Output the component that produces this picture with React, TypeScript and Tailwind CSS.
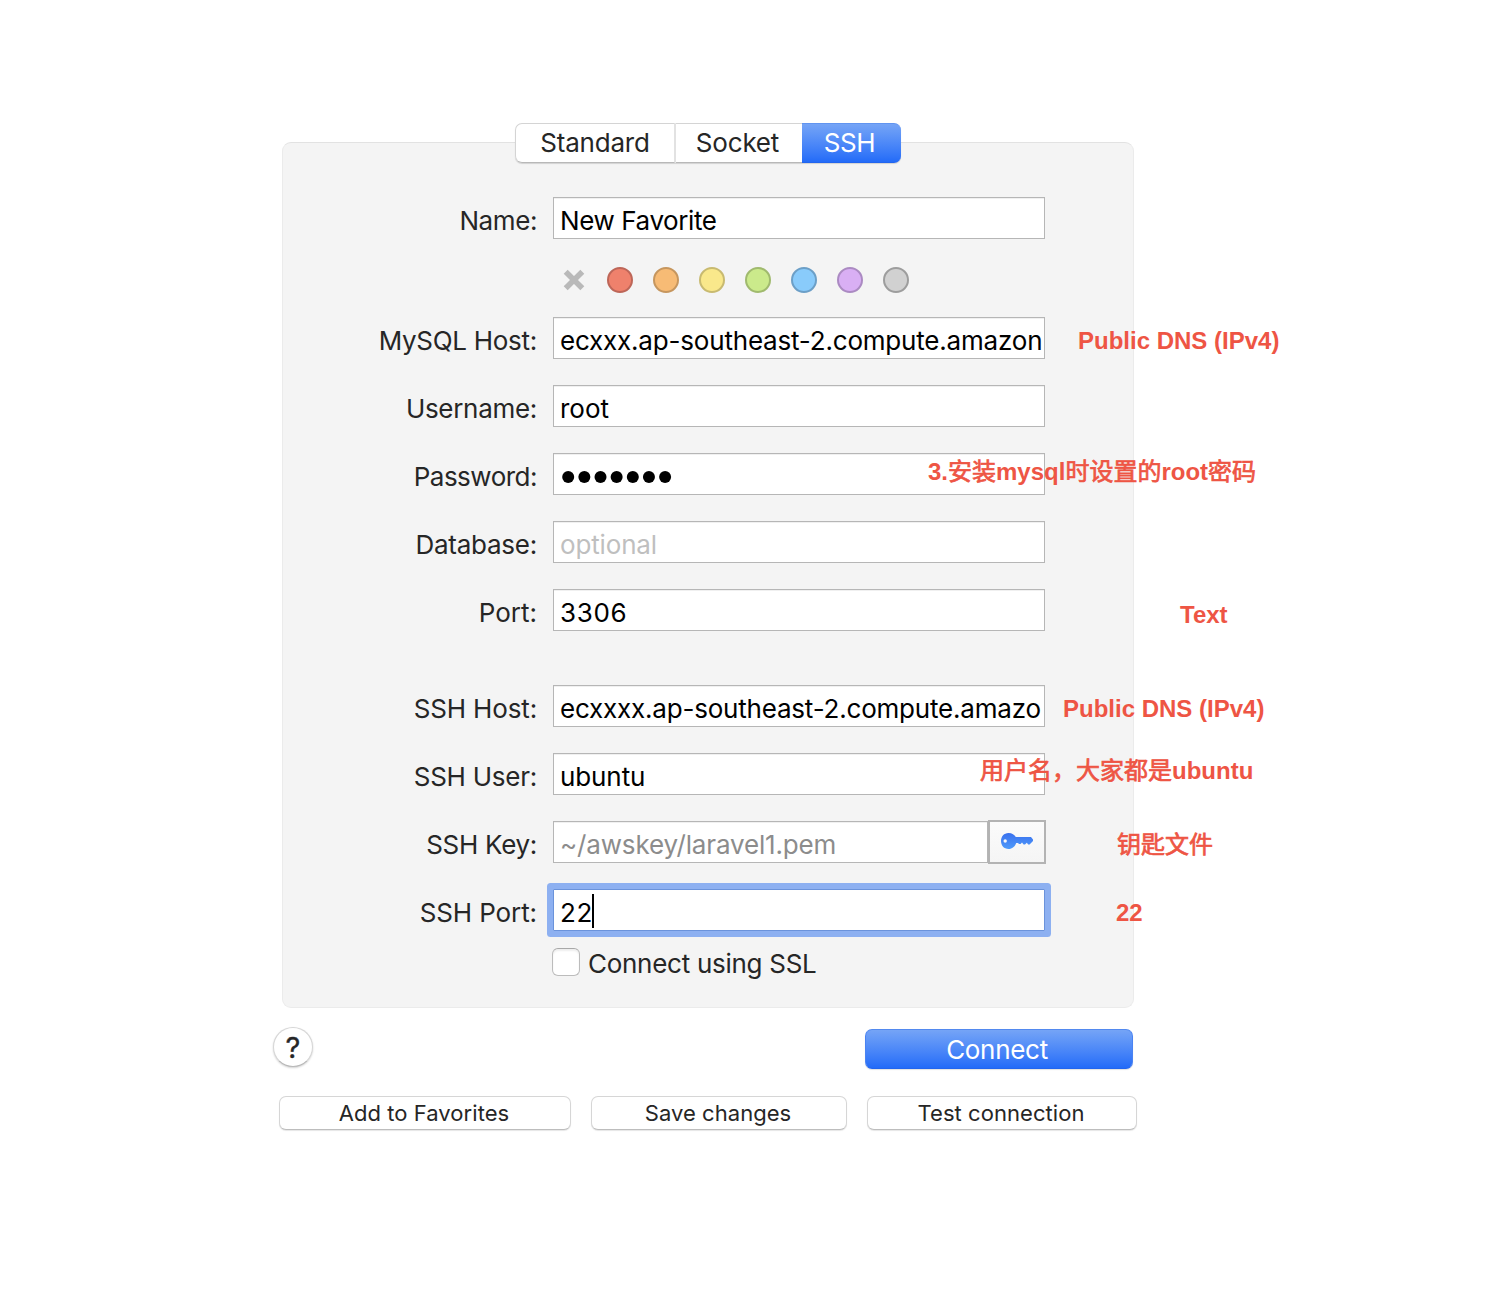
import type { ReactNode } from "react";

const swatches = [
  { name: "red", style: "bg-[#ef816c] border-[#bd6658]" },
  { name: "orange", style: "bg-[#f7bb75] border-[#c6965e]" },
  { name: "yellow", style: "bg-[#f9e88b] border-[#c8ba70]" },
  { name: "green", style: "bg-[#cbea8b] border-[#a0ba6e]" },
  { name: "blue", style: "bg-[#89cbfb] border-[#6c9fc7]" },
  { name: "purple", style: "bg-[#d9aff4] border-[#ab8ac2]" },
  { name: "gray", style: "bg-[#d1d1d1] border-[#9d9d9d]" },
];

type FieldProps = { label: string; labelStyle?: string; note?: ReactNode; children: ReactNode };

function Field({ label, labelStyle = "tracking-[-0.15px]", note, children }: FieldProps) {
  return (
    <div className="relative flex h-[42px] items-center">
      <div className={`w-[254px] shrink-0 pt-[5px] text-right whitespace-nowrap ${labelStyle}`}>{label}</div>
      <div className="ml-4 flex h-[42px] w-[492px] shrink-0">{children}</div>
      {note}
    </div>
  );
}

function Box({ style = "text-black", children }: { style?: string; children?: ReactNode }) {
  return (
    <div
      className={`flex h-full min-w-0 flex-1 items-center overflow-hidden border border-[#b6b6b6] bg-white pt-[5px] pl-[6px] whitespace-nowrap shadow-[inset_0_1px_0_#f0f0f0] ${style}`}
    >
      {children}
    </div>
  );
}

function Note({ place, children }: { place: string; children: ReactNode }) {
  return (
    <span
      className={`absolute z-10 font-['Liberation_Sans','Noto_Sans_CJK_SC',sans-serif] text-[24px] leading-[28px] font-bold whitespace-nowrap text-[#ee5544] ${place}`}
    >
      {children}
    </span>
  );
}

function Han({ children }: { children: ReactNode }) {
  return (
    <span className="font-['Noto_Sans_CJK_SC',sans-serif] font-normal [-webkit-text-stroke:0.7px_#ee5544]">
      {children}
    </span>
  );
}

function KeyIcon() {
  return (
    <svg width="34" height="18" viewBox="0 0 34 18">
      <defs>
        <linearGradient id="key" x1="0" y1="0" x2="0" y2="1">
          <stop offset="0" stopColor="#3a70ee" />
          <stop offset="1" stopColor="#4f9bfa" />
        </linearGradient>
      </defs>
      <path
        fill="url(#key)"
        fillRule="evenodd"
        d="M8.5 1C12 1 14.6 2.8 15.8 5H31L33 7.6V9L29.6 12.6H28.2L26.8 10.8L25 12.6H23.6L22 10.6L20.6 12H19.2L17.8 11H16.2C15 14.6 12.2 17 8.5 17C4 17 1 13.4 1 9C1 4.6 4 1 8.5 1ZM5.2 7.3A1.7 1.7 0 1 0 5.2 10.7A1.7 1.7 0 1 0 5.2 7.3Z"
      />
    </svg>
  );
}

const plainButton =
  "flex h-[34px] items-center justify-center rounded-[7px] border border-[#d6d6d6] border-b-[#bdbdbd] bg-white pr-[2px] text-[22px] tracking-[0.05px] text-[#262626] shadow-[0_1px_1px_rgba(0,0,0,0.1)]";

export default function App() {
  return (
    <main className="h-[1308px] w-[1500px] overflow-hidden bg-white pt-[123px] pl-[273px] font-['Inter',sans-serif] text-[26px] leading-[32px] text-[#262626]">
      <div className="w-[864px]">
        <div className="relative z-10 ml-[242px] flex h-10 w-[386px] rounded-[7px] shadow-[0_1px_1px_rgba(0,0,0,0.14)]">
          <button className="flex w-[161px] items-center justify-center rounded-l-[7px] border border-[#d4d4d4] border-r-2 border-r-[#e2e2e2] border-b-[#b8b8b8] bg-white tracking-[-0.2px]">
            Standard
          </button>
          <button className="flex w-[126px] items-center justify-center border-y border-[#d4d4d4] border-b-[#b8b8b8] bg-white pr-[3px] tracking-[-0.2px]">
            Socket
          </button>
          <button className="flex w-[99px] items-center justify-center rounded-r-[7px] border-y border-t-[#6194f0] border-b-[#2265ee] bg-linear-to-b from-[#75a4f6] to-[#236bf8] pr-1 tracking-[-0.4px] text-white">
            SSH
          </button>
        </div>

        <section className="-mt-[21px] ml-[9px] h-[866px] w-[852px] rounded-[9px] border border-[#ebebeb] border-t-[#e2e2e2] bg-[#f4f4f4] pt-[54px]">
          <Field label="Name:" labelStyle="tracking-[-0.4px]">
            <Box style="text-black tracking-[-0.4px]">New Favorite</Box>
          </Field>

          <div className="flex h-[78px] gap-5 pt-7 pl-[278px]">
            <svg className="mr-px" width="26" height="26" viewBox="0 0 26 26">
              <path d="M4.7 4.7L21.3 21.3M21.3 4.7L4.7 21.3" stroke="#b9b9b9" strokeWidth="5.6" />
            </svg>
            {swatches.map((s) => (
              <span key={s.name} className={`-ml-px mr-px size-[26px] rounded-full border-2 ${s.style}`} />
            ))}
          </div>

          <div className="flex flex-col gap-[26px]">
            <Field
              label="MySQL Host:"
              labelStyle="tracking-[-0.28px]"
              note={<Note place="left-[795px] top-[10px]">Public DNS (IPv4)</Note>}
            >
              <Box style="text-black tracking-[-0.19px]">ecxxx.ap-southeast-2.compute.amazon</Box>
            </Field>
            <Field label="Username:" labelStyle="tracking-[-0.3px]">
              <Box>root</Box>
            </Field>
            <Field
              label="Password:"
              labelStyle="tracking-[-0.5px]"
              note={
                <Note place="left-[645px] top-[3px]">
                  3.<Han>安装</Han>mysql<Han>时设置的</Han>root<Han>密码</Han>
                </Note>
              }
            >
              <Box>
                <svg className="ml-px" width="112" height="14" viewBox="0 0 112 14">
                  {[0, 1, 2, 3, 4, 5, 6].map((n) => (
                    <circle key={n} cx={7.2 + n * 16.15} cy="7" r="6" />
                  ))}
                </svg>
              </Box>
            </Field>
            <Field label="Database:" labelStyle="tracking-[-0.25px]">
              <Box style="text-[#bfbfbf] tracking-[-0.15px]">optional</Box>
            </Field>
            <Field
              label="Port:"
              labelStyle="tracking-[0px]"
              note={<Note place="left-[897px] top-[12px]">Text</Note>}
            >
              <Box style="text-black tracking-[0.7px]">3306</Box>
            </Field>
          </div>

          <div className="mt-[54px] flex flex-col gap-[26px]">
            <Field label="SSH Host:" note={<Note place="left-[780px] top-[10px]">Public DNS (IPv4)</Note>}>
              <Box style="text-black tracking-[-0.2px]">ecxxxx.ap-southeast-2.compute.amazo</Box>
            </Field>
            <Field
              label="SSH User:"
              labelStyle="tracking-[-0.25px]"
              note={
                <Note place="left-[697px] top-[2px]">
                  <Han>用户名，大家都是</Han>ubuntu
                </Note>
              }
            >
              <Box style="text-black tracking-[-0.1px]">ubuntu</Box>
            </Field>
            <Field
              label="SSH Key:"
              labelStyle="tracking-[-0.3px]"
              note={
                <Note place="left-[834px] top-[8px]">
                  <Han>钥匙文件</Han>
                </Note>
              }
            >
              <Box style="text-[#8c8c8c] tracking-[-0.15px]">~/awskey/laravel1.pem</Box>
              <button className="-my-px -mr-px flex h-11 w-[58px] items-start justify-center border-2 border-[#b3b3b3] bg-linear-to-b from-[#fbfbfb] to-[#f5f5f5] pt-[10px]">
                <KeyIcon />
              </button>
            </Field>
            <Field label="SSH Port:" labelStyle="tracking-[-0.1px]" note={<Note place="left-[833px] top-[10px]">22</Note>}>
              <div className="flex h-[42px] w-[492px] items-center rounded-[1px] border border-[#6b93db] bg-white pt-[5px] pl-[6px] tracking-[0.6px] text-black ring-6 ring-[#8db0f1]">
                22
                <span className="-mt-[3px] -ml-px h-[34px] w-[2px] bg-black" />
              </div>
            </Field>
          </div>

          <label className="mt-[17px] ml-[269px] flex h-7 items-center">
            <span className="size-7 rounded-[6px] border border-[#bcbcbc] border-t-[#a8a8a8] bg-white shadow-[inset_0_2px_2px_rgba(0,0,0,0.07)]" />
            <span className="ml-2 pt-1 tracking-[-0.28px]">Connect using SSL</span>
          </label>
        </section>

        <div className="mt-[19px] flex h-[42px] items-start justify-between pr-1">
          <button className="flex size-10 items-center justify-center rounded-full border border-[#d6d6d6] border-b-[#b8b8b8] bg-white pt-px text-[29px] shadow-[0_1px_2px_rgba(0,0,0,0.18)] [-webkit-text-stroke:0.3px_#262626]">
            ?
          </button>
          <button className="mt-[2px] flex h-10 w-[268px] items-center justify-center rounded-[7px] border border-[#5289ef] border-x-[#4a83f2] border-b-[#2265ee] bg-linear-to-b from-[#75a4f6] to-[#236bf8] pt-[2px] pr-[4px] tracking-[-0.3px] text-white shadow-[0_1px_1px_rgba(0,0,0,0.12)]">
            Connect
          </button>
        </div>

        <div className="mt-[27px] ml-1.5 flex gap-5">
          <button className={`${plainButton} w-[292px]`}>Add to Favorites</button>
          <button className={`${plainButton} w-[256px]`}>Save changes</button>
          <button className={`${plainButton} w-[270px]`}>Test connection</button>
        </div>
      </div>
    </main>
  );
}
